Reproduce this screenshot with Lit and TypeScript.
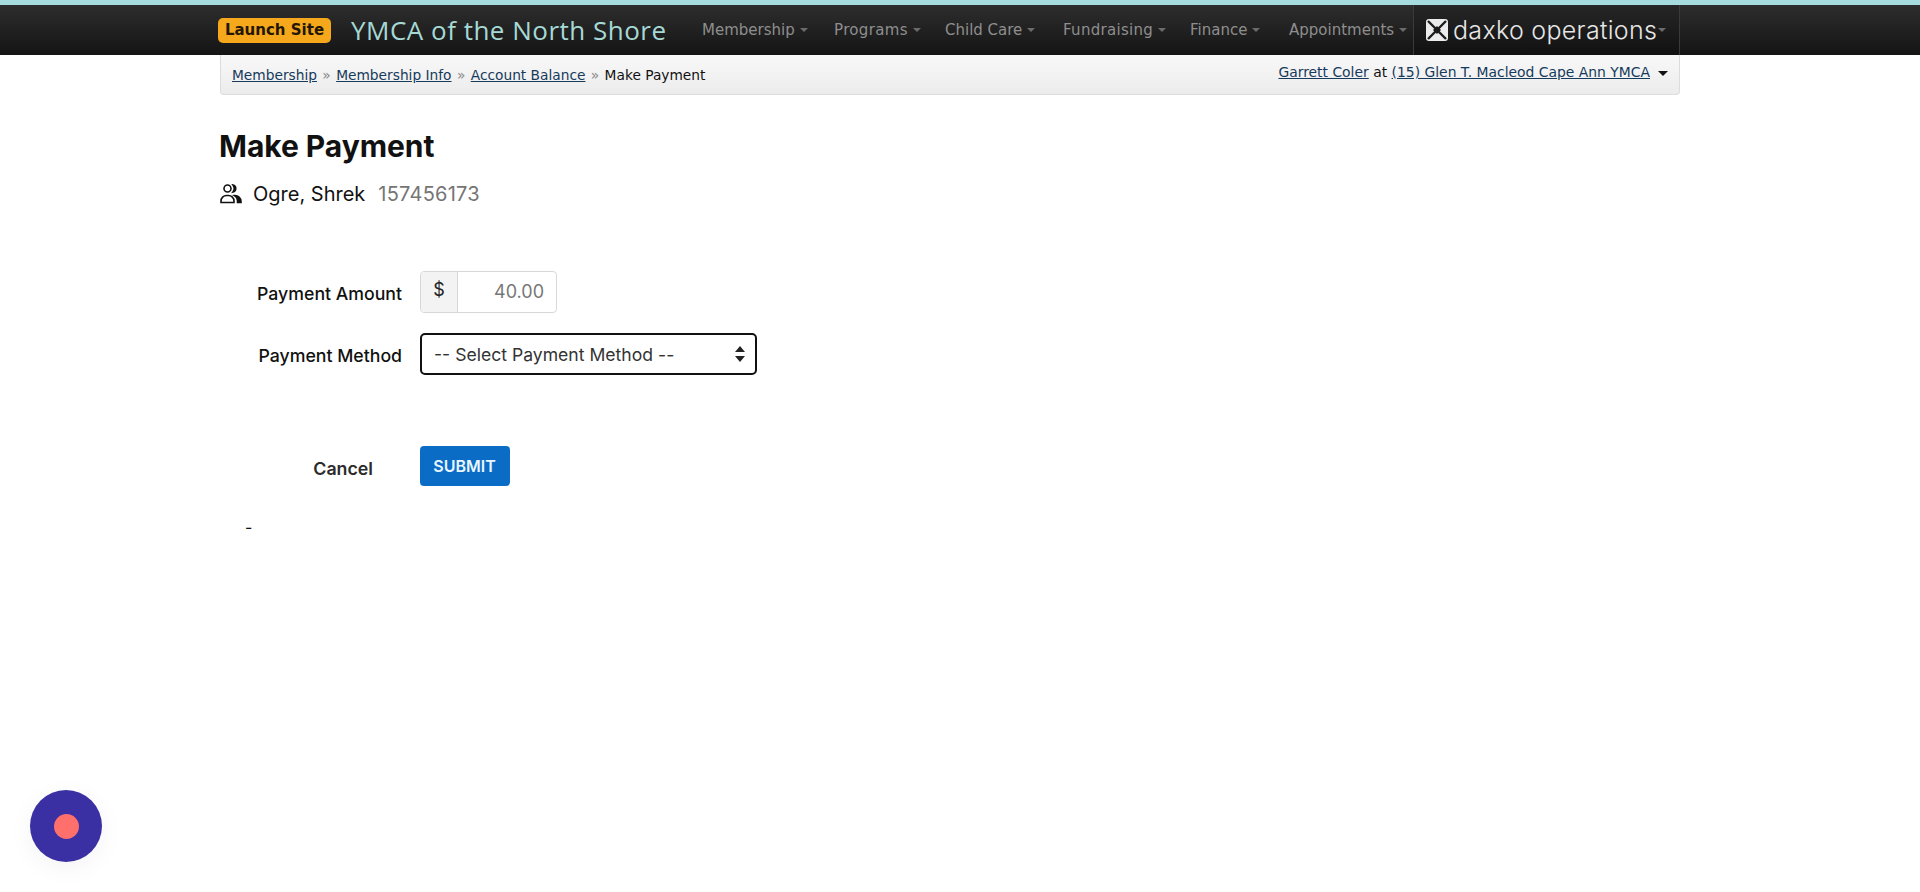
import { LitElement, html, css } from "lit";
import { customElement } from "lit/decorators.js";

const NAV = [
  { label: "Membership", w: 132 },
  { label: "Programs", w: 111, ls: 0.35 },
  { label: "Child Care", w: 118 },
  { label: "Fundraising", w: 127, ls: 0.3 },
  { label: "Finance", w: 99 },
  { label: "Appointments", w: 124 },
];

@customElement("app-root")
export class AppRoot extends LitElement {
  static styles = css`
    :host { display: block; min-height: 892px; background: #fff; font-family: "Inter", "Liberation Sans", sans-serif; color: #111; }
    .topbar { border-top: 5px solid #a6dcdf; height: 50px; background: linear-gradient(#2d2d2d, #141414); }
    .wrap { width: 1460px; margin-left: 220px; }
    .nav { display: flex; align-items: center; height: 50px; font-family: "DejaVu Sans", sans-serif; }
    .launch { background: #f5a81c; color: #241604; font-weight: 700; font-size: 15px; border-radius: 5px; height: 25px; width: 113px; margin-left: -2px; display: flex; align-items: center; justify-content: center; flex: none; white-space: nowrap; }
    .site { color: #a6d9d5; font-size: 26px; margin-left: 20px; width: 351px; white-space: nowrap; flex: none; font-family: "Open Sans", sans-serif; letter-spacing: 0.5px; }
    .menu { display: flex; align-items: center; color: #8e8e8e; font-size: 15px; flex: none; }
    .item { white-space: nowrap; display: flex; align-items: center; box-sizing: border-box; flex: none; }
    .caret { display: inline-block; flex: none; width: 0; height: 0; border-left: 4px solid transparent; border-right: 4px solid transparent; border-top: 4px solid #6b6b6b; margin-left: 5px; }
    .brand { display: flex; align-items: center; height: 50px; width: 267px; border-left: 1px solid #3a3a3a; border-right: 1px solid #3a3a3a; background: linear-gradient(#262626, #111); box-sizing: border-box; padding-left: 12px; flex: none; }
    .brand svg { flex: none; }
    .brand .logo { color: #e6e6e6; font-family: "Inter", sans-serif; font-weight: 300; font-size: 25px; margin-left: 5px; white-space: nowrap; line-height: 1; letter-spacing: 0.3px; }
    .crumbs { box-sizing: border-box; height: 40px; display: flex; justify-content: space-between; padding: 0 11px; font-family: "DejaVu Sans", sans-serif; background: linear-gradient(#f8f8f8, #ececec); border: 1px solid #dcdcdc; border-top: none; border-radius: 0 0 4px 4px; }
    .crumbs a { color: #163a5c; text-decoration: underline; }
    .left { padding-top: 12px; font-size: 13.75px; white-space: nowrap; color: #111; }
    .left i { font-style: normal; color: #888; margin: 0 1px; }
    .right { padding-top: 9px; font-size: 13.9px; white-space: nowrap; display: flex; align-items: flex-start; }
    .right .dd { width: 0; height: 0; border-left: 5px solid transparent; border-right: 5px solid transparent; border-top: 5px solid #111; margin: 7px 0 0 8px; }
    .content { width: 1460px; margin-left: 219px; }
    h1 { margin: 0; padding-top: 30px; font-size: 30px; line-height: 42px; font-weight: 700; color: #111; letter-spacing: -0.05px; }
    .person { display: flex; align-items: center; margin-top: 12px; height: 30px; font-size: 20px; }
    .person svg { margin: 0 11px 0 1px; }
    .person .id { color: #757575; margin-left: 13px; letter-spacing: 0.25px; }
    .row { display: flex; align-items: center; }
    .label { width: 183px; text-align: right; font-size: 17.7px; font-weight: 500; color: #111; flex: none; margin-right: 18px; }
    .amount { margin-top: 62px; height: 42px; }
    .amount .label { padding-top: 3px; }
    .group { box-sizing: border-box; display: flex; width: 137px; height: 42px; border: 1px solid #d8d8d8; border-radius: 4px; font-size: 18px; overflow: hidden; }
    .addon { width: 37px; background: #f3f3f3; border-right: 1px solid #d8d8d8; display: flex; align-items: center; justify-content: center; color: #222; padding-bottom: 5px; box-sizing: border-box; flex: none; }
    .value { flex: 1; text-align: right; color: #777; padding-right: 12px; line-height: 40px; }
    .method { margin-top: 20px; height: 42px; }
    .method .label { padding-top: 2px; }
    .selbox { position: relative; width: 337px; height: 42px; flex: none; }
    select { appearance: none; width: 100%; height: 100%; box-sizing: border-box; border: 2px solid #111; border-radius: 5px; background: #fff; font: 17.6px "Inter", sans-serif; color: #333; padding: 0 12px; outline: none; }
    .selbox svg { position: absolute; right: 12px; top: 13px; pointer-events: none; }
    .actions { margin-top: 71px; height: 40px; }
    .cancel { width: 154px; margin-right: 47px; text-align: right; font-size: 17.8px; font-weight: 600; color: #2b2b2b; padding-top: 4px; flex: none; }
    button { width: 90px; height: 40px; background: #0b6cc6; color: #e9f6ff; border: none; border-radius: 4px; font: 600 16px "Inter", sans-serif; padding: 0 1px 1px 0; }
    .dash { margin: 29px 0 0 26px; font-size: 16px; line-height: 24px; color: #111; }
    .fab { position: fixed; left: 30px; top: 790px; width: 72px; height: 72px; border-radius: 50%; background: #3a2fa3; display: flex; align-items: center; justify-content: center; box-shadow: 0 6px 24px rgba(0,0,0,0.05); }
    .fab b { display: block; width: 25px; height: 25px; border-radius: 50%; background: #ff6f6b; }
  `;

  render() {
    return html`
      <div class="topbar">
        <div class="wrap nav">
          <div class="launch">Launch Site</div>
          <div class="site">YMCA of the North Shore</div>
          <div class="menu">
            ${NAV.map((n) => html`<span class="item" style="width:${n.w}px;letter-spacing:${n.ls ?? 0}px">${n.label}<span class="caret"></span></span>`)}
          </div>
          <div class="brand">
            <svg width="22" height="22" viewBox="0 0 22 22">
              <rect width="22" height="22" rx="3" fill="#ececec"/>
              <path d="M2 2 L20 20 M20 2 L2 20" stroke="#1c1c1c" stroke-width="2.4"/>
              <path d="M11 7 L15 11 L11 15 L7 11 Z" fill="#1c1c1c"/>
            </svg>
            <span class="logo">daxko operations</span><span class="caret" style="margin-left:1px"></span>
          </div>
        </div>
      </div>
      <div class="wrap crumbs">
        <div class="left">
          <a href="#">Membership</a> <i>»</i> <a href="#">Membership Info</a> <i>»</i> <a href="#">Account Balance</a> <i>»</i> Make Payment
        </div>
        <div class="right">
          <span><a href="#">Garrett Coler</a> at <a href="#">(15) Glen T. Macleod Cape Ann YMCA</a></span><span class="dd"></span>
        </div>
      </div>
      <main class="content">
        <h1>Make Payment</h1>
        <div class="person">
          <svg width="22" height="20" viewBox="0 0 22 20" fill="none" stroke="#111" stroke-width="1.6">
            <circle cx="7.5" cy="4.5" r="3.5"/>
            <path d="M1 18.5 v-1.5 a5.5 5.5 0 0 1 5.5-5.5 h2 a5.5 5.5 0 0 1 5.5 5.5 v1.5 Z"/>
            <path d="M13 1 a3.6 3.6 0 0 1 0 7 a6 6 0 0 0 0-7 Z" fill="#111"/>
            <path d="M14.5 11.5 a6 6 0 0 1 6.5 6 v1 h-3.5 v-2 a6 6 0 0 0 -3-5 Z" fill="#111"/>
          </svg>
          <span>Ogre, Shrek</span><span class="id">157456173</span>
        </div>
        <div class="row amount">
          <div class="label">Payment Amount</div>
          <div class="group"><div class="addon">$</div><div class="value">40.00</div></div>
        </div>
        <div class="row method">
          <div class="label">Payment Method</div>
          <div class="selbox">
            <select><option>-- Select Payment Method --</option></select>
            <svg width="10" height="16" viewBox="0 0 10 16"><path d="M5 0 L10 6 H0 Z M5 16 L10 10 H0 Z" fill="#222"/></svg>
          </div>
        </div>
        <div class="row actions">
          <div class="cancel">Cancel</div>
          <button>SUBMIT</button>
        </div>
        <div class="dash">-</div>
      </main>
      <div class="fab"><b></b></div>
    `;
  }
}
